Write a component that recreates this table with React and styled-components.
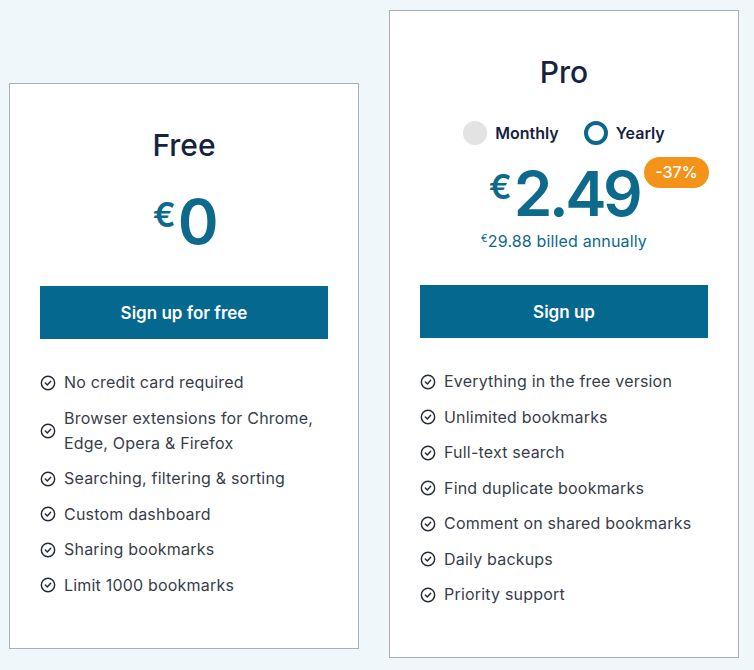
import styled, { createGlobalStyle } from "styled-components";

const Global = createGlobalStyle`
body {
  margin: 0;
  background: #eff7fa;
  font-family: Inter, "Noto Sans", sans-serif;
}
`
const Page = styled.div`
display: flex;
align-items: flex-start;
gap: 30px;
padding: 10px 0 0 9px;
`
const Card = styled.div`
width: 350px;
box-sizing: border-box;
margin-top: ${p => p.$offset || 0}px;
background: #fff;
border: 1px solid #a8b0b6;
padding: 43px 30px 50px;
display: flex;
flex-direction: column;
`
const Title = styled.div`
text-align: center;
font-size: 30px;
line-height: 36px;
font-weight: 500;
color: #16223f;
`
const Toggle = styled.div`
display: flex;
justify-content: center;
align-items: center;
margin-top: 31px;
height: 24px;
`
const Option = styled.div`
display: flex;
align-items: center;
gap: 8px;
font-size: 16px;
font-weight: 600;
color: #16223f;
margin-left: ${p => p.$gap || 0}px;
`
const Radio = styled.span`
width: 24px;
height: 24px;
box-sizing: border-box;
border-radius: 50%;
background: ${p => p.$on ? "#fff" : "#e3e3e3"};
border: ${p => p.$on ? "4.5px solid #0b688d" : "none"};
`
const PriceRow = styled.div`
display: flex;
justify-content: center;
align-items: flex-start;
margin-top: ${p => p.$top}px;
color: #0d6a8d;
`
const Currency = styled.span`
font-size: 34px;
line-height: 34px;
font-weight: 600;
margin-top: 7px;
margin-right: 2px;
`
const Amount = styled.span`
position: relative;
font-size: 62px;
line-height: 62px;
font-weight: 600;
letter-spacing: -3.5px;
`
const Badge = styled.span`
position: absolute;
left: calc(100% + 5px);
top: -6px;
height: 31px;
padding: 0 11px;
border-radius: 16px;
background: #f3931a;
color: #fff;
font-size: 16px;
line-height: 31px;
font-weight: 500;
letter-spacing: 0;
white-space: nowrap;
`
const Billed = styled.div`
text-align: center;
margin-top: 6px;
font-size: 16px;
line-height: 20px;
color: #0d6a8d;
letter-spacing: 0.15px;
sup {
  font-size: 10px;
  vertical-align: 5px;
  line-height: 0;
}
`
const Button = styled.button`
margin-top: ${p => p.$top}px;
height: 53px;
width: 100%;
border: none;
background: #04688f;
color: #fff;
font-family: inherit;
font-size: 17px;
font-weight: 600;
cursor: pointer;
`
const List = styled.ul`
list-style: none;
margin: 31px 0 0;
padding: 0;
display: flex;
flex-direction: column;
gap: 10.5px;
`
const Item = styled.li`
display: flex;
align-items: center;
gap: 8px;
font-size: 16px;
line-height: 25px;
letter-spacing: 0.2px;
color: #373e4b;
svg { flex-shrink: 0; }
`

function Check() {
    return (
        <svg width="16" height="16" viewBox="0 0 24 24" fill="none" stroke="#262c36" strokeWidth="2.2" strokeLinecap="round" strokeLinejoin="round">
            <circle cx="12" cy="12" r="10" />
            <path d="m8 12 3 3 5-5.5" />
        </svg>
    )
}

const free = [
    "No credit card required",
    "Browser extensions for Chrome, Edge, Opera & Firefox",
    "Searching, filtering & sorting",
    "Custom dashboard",
    "Sharing bookmarks",
    "Limit 1000 bookmarks",
]
const pro = [
    "Everything in the free version",
    "Unlimited bookmarks",
    "Full-text search",
    "Find duplicate bookmarks",
    "Comment on shared bookmarks",
    "Daily backups",
    "Priority support",
]

function Features({ items }) {
    return (
        <List>
            {items.map(t => (
                <Item key={t}><Check />{t}</Item>
            ))}
        </List>
    )
}

export default function App() {
    return (
        <>
            <Global />
            <Page>
                <Card $offset={73}>
                    <Title>Free</Title>
                    <PriceRow $top={28}>
                        <Currency>€</Currency>
                        <Amount>0</Amount>
                    </PriceRow>
                    <Button $top={33}>Sign up for free</Button>
                    <Features items={free} />
                </Card>
                <Card>
                    <Title>Pro</Title>
                    <Toggle>
                        <Option><Radio />Monthly</Option>
                        <Option $gap={25}><Radio $on />Yearly</Option>
                    </Toggle>
                    <PriceRow $top={18}>
                        <Currency>€</Currency>
                        <Amount>2.49<Badge>-37%</Badge></Amount>
                    </PriceRow>
                    <Billed><sup>€</sup>29.88 billed annually</Billed>
                    <Button $top={34}>Sign up</Button>
                    <Features items={pro} />
                </Card>
            </Page>
        </>
    )
}
